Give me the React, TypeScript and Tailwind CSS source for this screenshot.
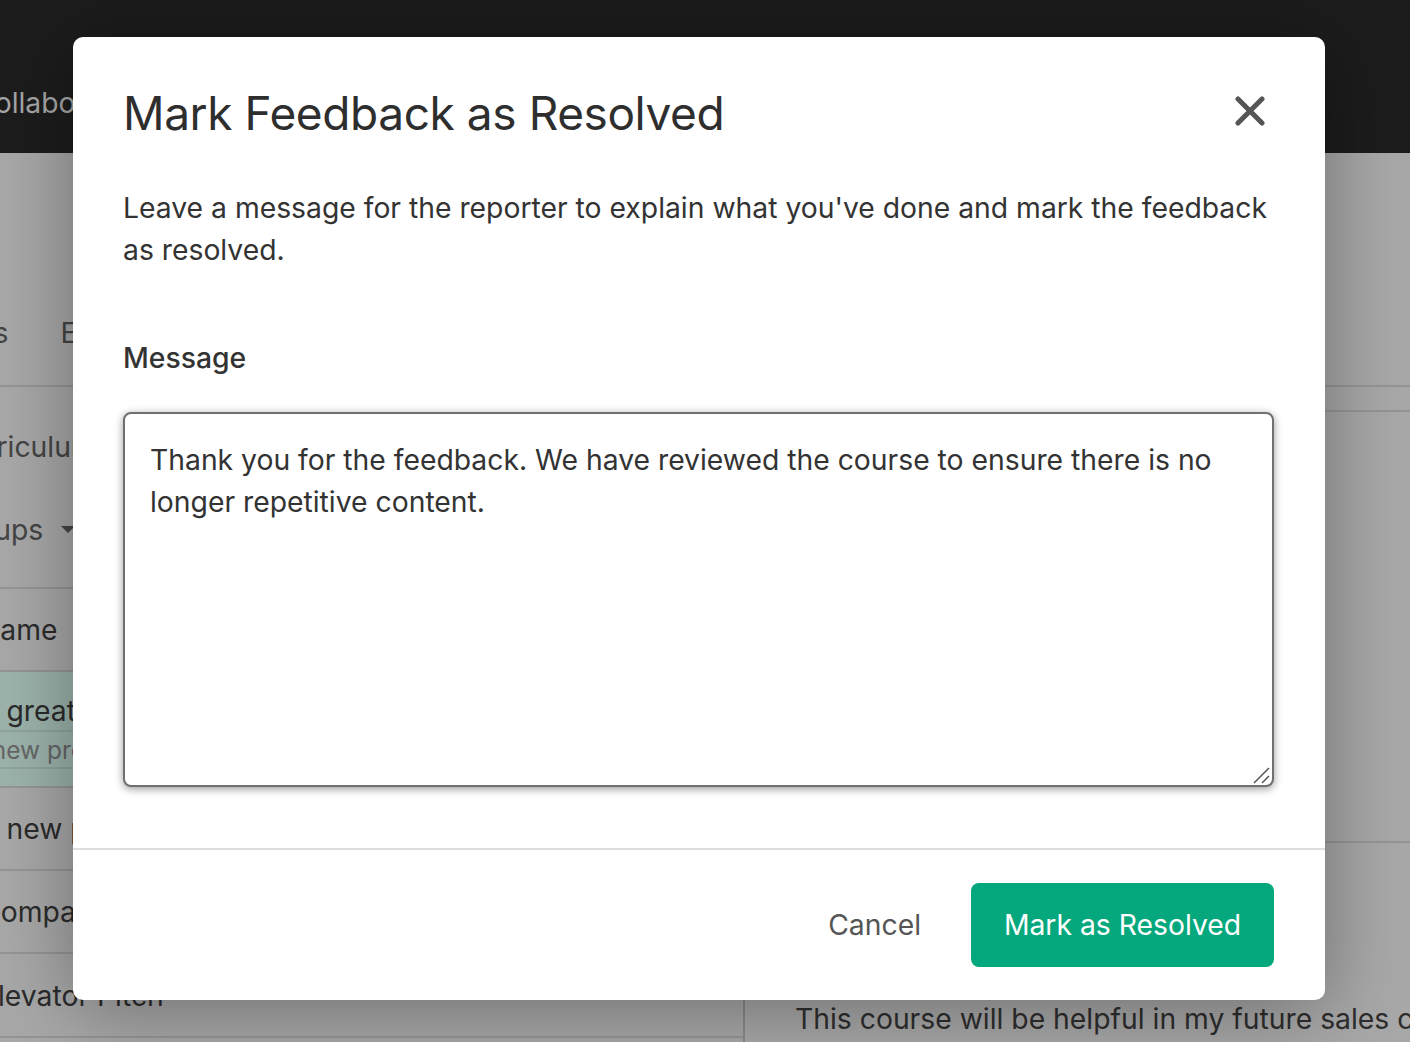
const font = { fontFamily: "Inter, 'Liberation Sans', sans-serif" };

function Row({ text, className = "" }: { text: string; className?: string }) {
  return (
    <div className={`flex h-[83px] shrink-0 items-center border-b-2 border-[#959595] pt-[2px] text-[28.3px] text-[#2b2b2b] whitespace-nowrap ${className}`}>
      {text}
    </div>
  );
}

function Backdrop() {
  return (
    <div className="flex h-[1042px] w-[1410px] flex-col overflow-hidden bg-[#a8a8a8]">
      <header className="flex h-[153px] shrink-0 items-end bg-[#1c1c1c] pb-[29px]">
        <span className="-ml-[26px] text-[28.3px] text-[#a6a6a6]">Collaborate</span>
      </header>

      {/* tabs */}
      <div className="flex h-[234px] shrink-0 items-end gap-[52px] border-b-2 border-[#959595] pb-[31px] text-[28.3px] text-[#444]">
        <span className="-ml-[152px]">Discussions</span>
        <span>Events</span>
      </div>

      <div className="flex min-h-0 flex-1">
        <div className="flex w-[743px] shrink-0 flex-col">
          <div className="flex h-[85px] shrink-0 items-end pb-[4px] text-[28.3px] text-[#444]">
            <span className="-ml-[52px]">Curriculum</span>
          </div>
          <div className="flex h-[117px] shrink-0 items-start gap-[18px] border-b-2 border-[#959595] pt-[37px] text-[28.3px] text-[#444]">
            <span className="-ml-[54px]">Groups</span>
            <span className="mt-[17px] h-0 w-0 border-x-[7px] border-t-[7px] border-x-transparent border-t-[#444]" />
          </div>
          <Row text="Name" className="[text-indent:-21px]" />
          <div className="flex h-[116px] shrink-0 flex-col border-b-2 border-[#959595] bg-[#9cb3ac]">
            <div className="flex h-[60px] shrink-0 items-end border-b-2 border-[#8fa49d] pb-[1px] text-[28.3px] leading-[36px] text-[#2b2b2b]">
              <span className="-ml-[21px]">A great idea</span>
            </div>
            <div className="flex h-[37px] shrink-0 items-center border-b-2 border-[#8fa49d] pt-[2px] text-[24.5px] text-[#666]">
              <span className="-ml-[32px]">A new project</span>
            </div>
          </div>
          <Row text="A new project" className="[text-indent:-21px]" />
          <Row text="Company" className="[text-indent:-20px]" />
          <Row text="Elevator Pitch" className="h-[84px] [text-indent:-19px]" />
        </div>
        <div className="flex min-w-0 flex-1 flex-col border-l-2 border-[#8a8a8a]">
          <div className="h-[25px] shrink-0 border-b-2 border-[#959595]" />
          <div className="h-[431px] shrink-0 border-b-2 border-[#959595]" />
          <p className="mt-[155px] pl-[50px] text-[28.3px] leading-[42px] whitespace-nowrap text-[#2e2e2e]">
            This course will be helpful in my future sales career
          </p>
        </div>
      </div>
    </div>
  );
}

export default function App() {
  return (
    <div className="relative h-[1042px] w-[1410px] overflow-hidden" style={font}>
      <Backdrop />

      <div className="absolute left-[73px] top-[37px] flex h-[963px] w-[1252px] flex-col rounded-[10px] bg-white shadow-[0_10px_80px_rgba(0,0,0,0.35)]">
        <div className="flex min-h-0 flex-1 flex-col pl-[50px] pr-[51px] pt-[47px]">
          <div className="flex items-start justify-between">
            <h2 className="text-[46px] leading-[58px] font-normal tracking-[-0.009em] text-[#2e2e2e]">Mark Feedback as Resolved</h2>
            <button className="mr-[9px] mt-[12px] text-[#555]" aria-label="Close">
              <svg width="30" height="30" viewBox="0 0 30 30" fill="none" stroke="currentColor" strokeWidth="5" strokeLinecap="round">
                <path d="M3 3 27 27M27 3 3 27" />
              </svg>
            </button>
          </div>

          <p className="mt-[45px] text-[28.3px] leading-[42px] text-[#333]">
            Leave a message for the reporter to explain what you've done and mark the feedback as resolved.
          </p>

          <label className="mt-[66px] block text-[28.3px] leading-[42px] font-medium text-[#333]">Message</label>

          <div className="relative mt-[33px]">
            <textarea
              className="block h-[375px] w-full resize-none rounded-[8px] border-2 border-[#707070] bg-white px-[25px] py-[25px] text-[28.3px] leading-[42px] text-[#333] shadow-[0_2px_8px_rgba(0,0,0,0.4)] outline-none"
              defaultValue="Thank you for the feedback. We have reviewed the course to ensure there is no longer repetitive content."
            />
            {/* resize grip */}
            <svg className="absolute bottom-[2px] right-[3px] h-[18px] w-[18px] text-[#555]" viewBox="0 0 18 18" fill="none" stroke="currentColor" strokeWidth="1.5">
              <path d="M1 16 16 1M9 16 16 9" />
            </svg>
          </div>
        </div>

        <footer className="flex h-[152px] shrink-0 items-center justify-end gap-[50px] border-t-2 border-[#dedede] pr-[51px]">
          <button className="text-[28.3px] text-[#555]">Cancel</button>
          <button className="flex h-[84px] w-[303px] items-center justify-center rounded-[8px] bg-[#05a87c] text-[28.3px] text-white">
            Mark as Resolved
          </button>
        </footer>
      </div>
    </div>
  );
}
